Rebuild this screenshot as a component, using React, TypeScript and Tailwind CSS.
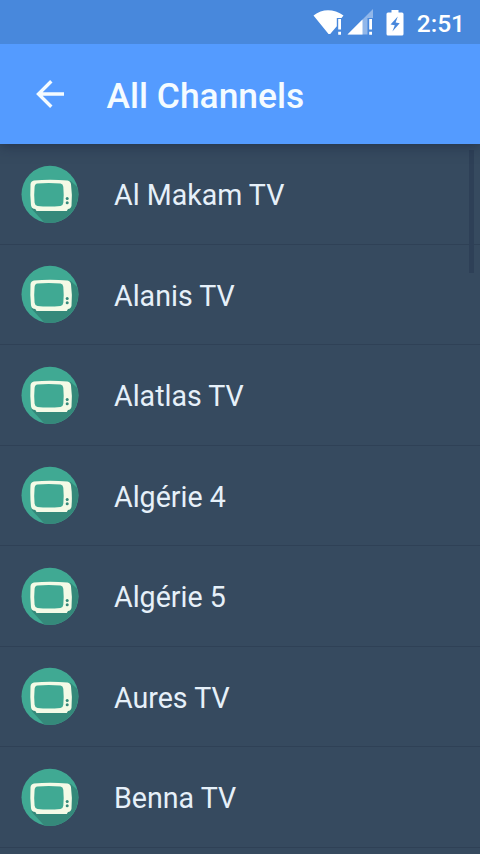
const channels = [
  "Al Makam TV",
  "Alanis TV",
  "Alatlas TV",
  "Algérie 4",
  "Algérie 5",
  "Aures TV",
  "Benna TV",
];

const WifiIcon = () => (
  <svg className="w-[31px] h-[27px]" viewBox="0 0 31 27">
    <path
      d="M0.5 6.5C5 3 10 1.2 15 1.2S26 3 30.5 6.5L28.5 9H23.8V17.2L17.2 25H15.5Z"
      fill="#fff"
    />
    <path d="M25.2 10h2.8v10.5h-2.8zM25.2 22.8h2.8v3h-2.8z" fill="#fff" />
  </svg>
);

const SignalIcon = () => (
  <svg className="w-[27px] h-[27px]" viewBox="0 0 27 27">
    <path d="M0.5 25.5L26 0V9H20.5V25.5Z" fill="#fff" fillOpacity="0.4" />
    <path d="M0.5 25.5L15.5 10.5V25.5Z" fill="#fff" />
    <path d="M22.2 10H25v10.5h-2.8zM22.2 22.8H25v3h-2.8z" fill="#fff" />
  </svg>
);

const BatteryIcon = () => (
  <svg className="w-[18px] h-[27px]" viewBox="0 0 18 27">
    <path
      fillRule="evenodd"
      d="M5.5 1H12.5V3.5H16Q17.5 3.5 17.5 5V25Q17.5 26.5 16 26.5H2Q0.5 26.5 0.5 25V5Q0.5 3.5 2 3.5H5.5ZM11.8 7.5L4.5 15.6L8.8 16.2L6.4 22.6L13.7 14.2L9.6 13.5Z"
      fill="#fff"
    />
  </svg>
);

const BackIcon = () => (
  <svg className="w-7 h-7 shrink-0" viewBox="0 0 28 28" fill="none">
    <path d="M28 14H2.5M15.3 1.2L2.5 14L15.3 26.8" stroke="#f4fbff" strokeWidth="3.4" />
  </svg>
);

const TvIcon = () => (
  <svg className="w-[58px] h-[58px] shrink-0" viewBox="0 0 58 58">
    <g transform="translate(0.5 0.8)">
      <circle cx="28.5" cy="28.5" r="28.5" fill="#40a993" />
      <path d="M49 15L55.8 21.2A28.5 28.5 0 0 1 22.5 56.4L10 43Z" fill="#35897a" />
      <path
        d="M12.5 14.6Q28 13.4 46 14.6Q49 15 49.5 18.5Q51 29 50 40Q49.5 43 46.5 43.2L45.3 45.3H15L13.8 43.2Q10 43 9.5 39.5Q8.4 29 9 18.5Q9.4 15 12.5 14.6Z"
        fill="#f4fae6"
      />
      <path
        d="M16 17.8Q27 16.5 39 17.8Q41.5 18.1 41.8 21Q42.6 29 41.8 37Q41.5 39.8 39 40.1Q27 41.1 16 40.1Q13.4 39.8 13.1 37Q12.3 29 13.1 21Q13.4 18.1 16 17.8Z"
        fill="#40a993"
      />
      <circle cx="45.7" cy="32.6" r="1.5" fill="#35897a" />
      <circle cx="45.7" cy="37" r="1.5" fill="#35897a" />
    </g>
  </svg>
);

const StatusBar = () => (
  <div className="relative z-20 h-11 shrink-0 bg-[#4888dc] flex items-center justify-end pr-[15px] text-white">
    <WifiIcon />
    <div className="ml-[3px]">
      <SignalIcon />
    </div>
    <div className="ml-3">
      <BatteryIcon />
    </div>
    <span className="ml-[13px] mt-[5px] text-[24.5px] leading-none font-medium">2:51</span>
  </div>
);

const App = () => {
  return (
    <div className="relative flex flex-col w-[480px] h-[854px] overflow-hidden bg-[#364a5f] font-['Roboto',sans-serif]">
      <StatusBar />
      <header className="relative z-10 h-[100px] shrink-0 flex items-center bg-[#549bff] pl-[35.5px] shadow-[0_2px_12px_rgba(20,30,55,0.5)]">
        <BackIcon />
        <h1 className="ml-[43px] mt-[5px] text-[35.4px] leading-none font-medium text-[#f4fbff]">
          All Channels
        </h1>
      </header>
      <ul className="flex flex-col">
        {channels.map((name) => (
          <li
            key={name}
            className="h-[100.5px] shrink-0 flex items-center pl-[21px] border-b border-[#2f4156]"
          >
            <TvIcon />
            <span className="ml-[35px] mt-1 text-[28.6px] leading-none text-[#e6f0f9]">{name}</span>
          </li>
        ))}
      </ul>
      <div className="absolute right-[6px] top-[150px] w-[5px] h-[123px] bg-[#2e4057]" />
    </div>
  );
};

export default App;
